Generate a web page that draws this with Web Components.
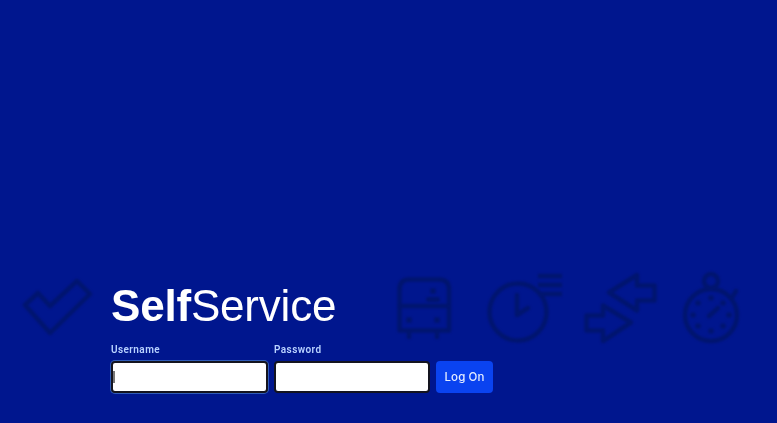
<!DOCTYPE html>
<html lang="en"><head><meta charset="utf-8"><title>SelfService</title>
<style>html,body{margin:0;height:100%;background:#00168e;overflow:hidden}</style></head>
<body>
<login-page>
  <backdrop-icons slot="backdrop"></backdrop-icons>
  <login-title slot="title"><b>Self</b>Service</login-title>
  <login-field label="Username" focused></login-field>
  <login-field label="Password" type="password" style="--w:156px"></login-field>
  <login-button>Log On</login-button>
</login-page>
<script>
function def(name, html, init){
  customElements.define(name, class extends HTMLElement{
    constructor(){super();const r=this.attachShadow({mode:'open'});const t=document.createElement('template');t.innerHTML=html;r.appendChild(t.content.cloneNode(true));}
    connectedCallback(){init&&init.call(this,this.shadowRoot);}
  });
}
def('login-page',`<style>
:host{display:flex;flex-direction:column;justify-content:flex-end;position:relative;width:100%;height:100%;box-sizing:border-box;padding:0 0 30px 111px;background:#00168e;overflow:hidden}
.bg{position:absolute;inset:0}
.content{position:relative;display:flex;flex-direction:column;filter:blur(.3px)}
.row{display:flex;align-items:flex-end;gap:6px;margin-top:12px}
</style><div class="bg"><slot name="backdrop"></slot></div>
<div class="content"><slot name="title"></slot><div class="row"><slot></slot></div></div>`);
def('login-title',`<style>
:host{display:block;font:44px/50px "Liberation Sans",Arial,sans-serif;letter-spacing:-.2px;color:#fff}
::slotted(b){font-weight:700}
</style><slot></slot>`);
def('login-field',`<style>
:host{display:flex;flex-direction:column;gap:4px;font:600 10px/14px Roboto,sans-serif;letter-spacing:.42px;color:#b8d2ff}
.box{position:relative;display:block;width:var(--w,157px);height:32px}
input{display:block;box-sizing:border-box;width:100%;height:100%;margin:0;padding:0 3px;background:#fff;border:2px solid #14141f;border-radius:4px;outline:none}
:host([focused]) input{box-shadow:0 0 0 1px #2f5bb8}
.caret{display:none;position:absolute;left:2px;top:10px;width:2px;height:12px;background:#777}
:host([focused]) .caret{display:block}
</style><label><span id="l"></span></label><span class="box"><input><span class="caret"></span></span>`,function(r){
  r.getElementById('l').textContent=this.getAttribute('label');
  const i=r.querySelector('input');i.type=this.getAttribute('type')||'text';i.setAttribute('aria-label',this.getAttribute('label'));
});
def('login-button',`<style>
:host{display:block}
button{display:block;width:57px;height:32px;padding:0;border:0;border-radius:4px;background:#0a43f0;color:#e6eeff;font:500 11.5px/31px Inter,sans-serif;letter-spacing:.1px}
</style><button><slot></slot></button>`);
def('backdrop-icons',`<style>
:host{display:block;position:absolute;inset:0}
svg{position:absolute;left:0;top:0;width:777px;height:423px;fill:none;stroke:#00156f;stroke-width:4.5;stroke-linejoin:round;stroke-linecap:round;filter:blur(.8px)}
.f{fill:#00156f;stroke:none}
</style><svg viewBox="0 0 777 423" aria-hidden="true">
<path d="M25 305L38 293L50 306L77 281L90 294L50 333Z"/>
<g>
<path d="M409 279.500H439Q449 279.500 449 289.500V330.500H399.500V289.500Q399.500 279.500 409 279.500Z"/>
<path d="M399.500 306H449"/>
<circle class="f" cx="433" cy="291" r="3"/>
<rect class="f" x="426" y="297" width="14" height="5" rx="2.500"/>
<circle class="f" cx="409" cy="320" r="3"/><circle class="f" cx="437" cy="320" r="3"/>
<path d="M409 332V337M437 332V337"/>
</g>
<g>
<circle cx="518" cy="312" r="28.500"/>
<path d="M517 295V315L528 308"/>
<path stroke-linecap="butt" d="M538 276H562M538 285H562M538 294H562"/>
</g>
<path d="M609 292.500L637 275V285.500H654.500V300.500H637V310.500Z"/>
<path d="M631 322.500L603 305.500V315.500H586.500V330.500H603V341Z"/>
<g>
<circle cx="711" cy="315" r="26"/>
<circle cx="711" cy="281" r="7"/>
<path d="M733 296L736 291"/>
<path d="M709 316L718 308"/>
<g class="f"><circle cx="711" cy="298" r="2.800"/><circle cx="698" cy="303" r="2.800"/><circle cx="723" cy="303" r="2.800"/><circle cx="693" cy="315" r="2.800"/><circle cx="729" cy="315" r="2.800"/><circle cx="698" cy="326" r="2.800"/><circle cx="723" cy="326" r="2.800"/><circle cx="711" cy="331" r="2.800"/></g>
</g>
</svg>`);
</script>
</body></html>
